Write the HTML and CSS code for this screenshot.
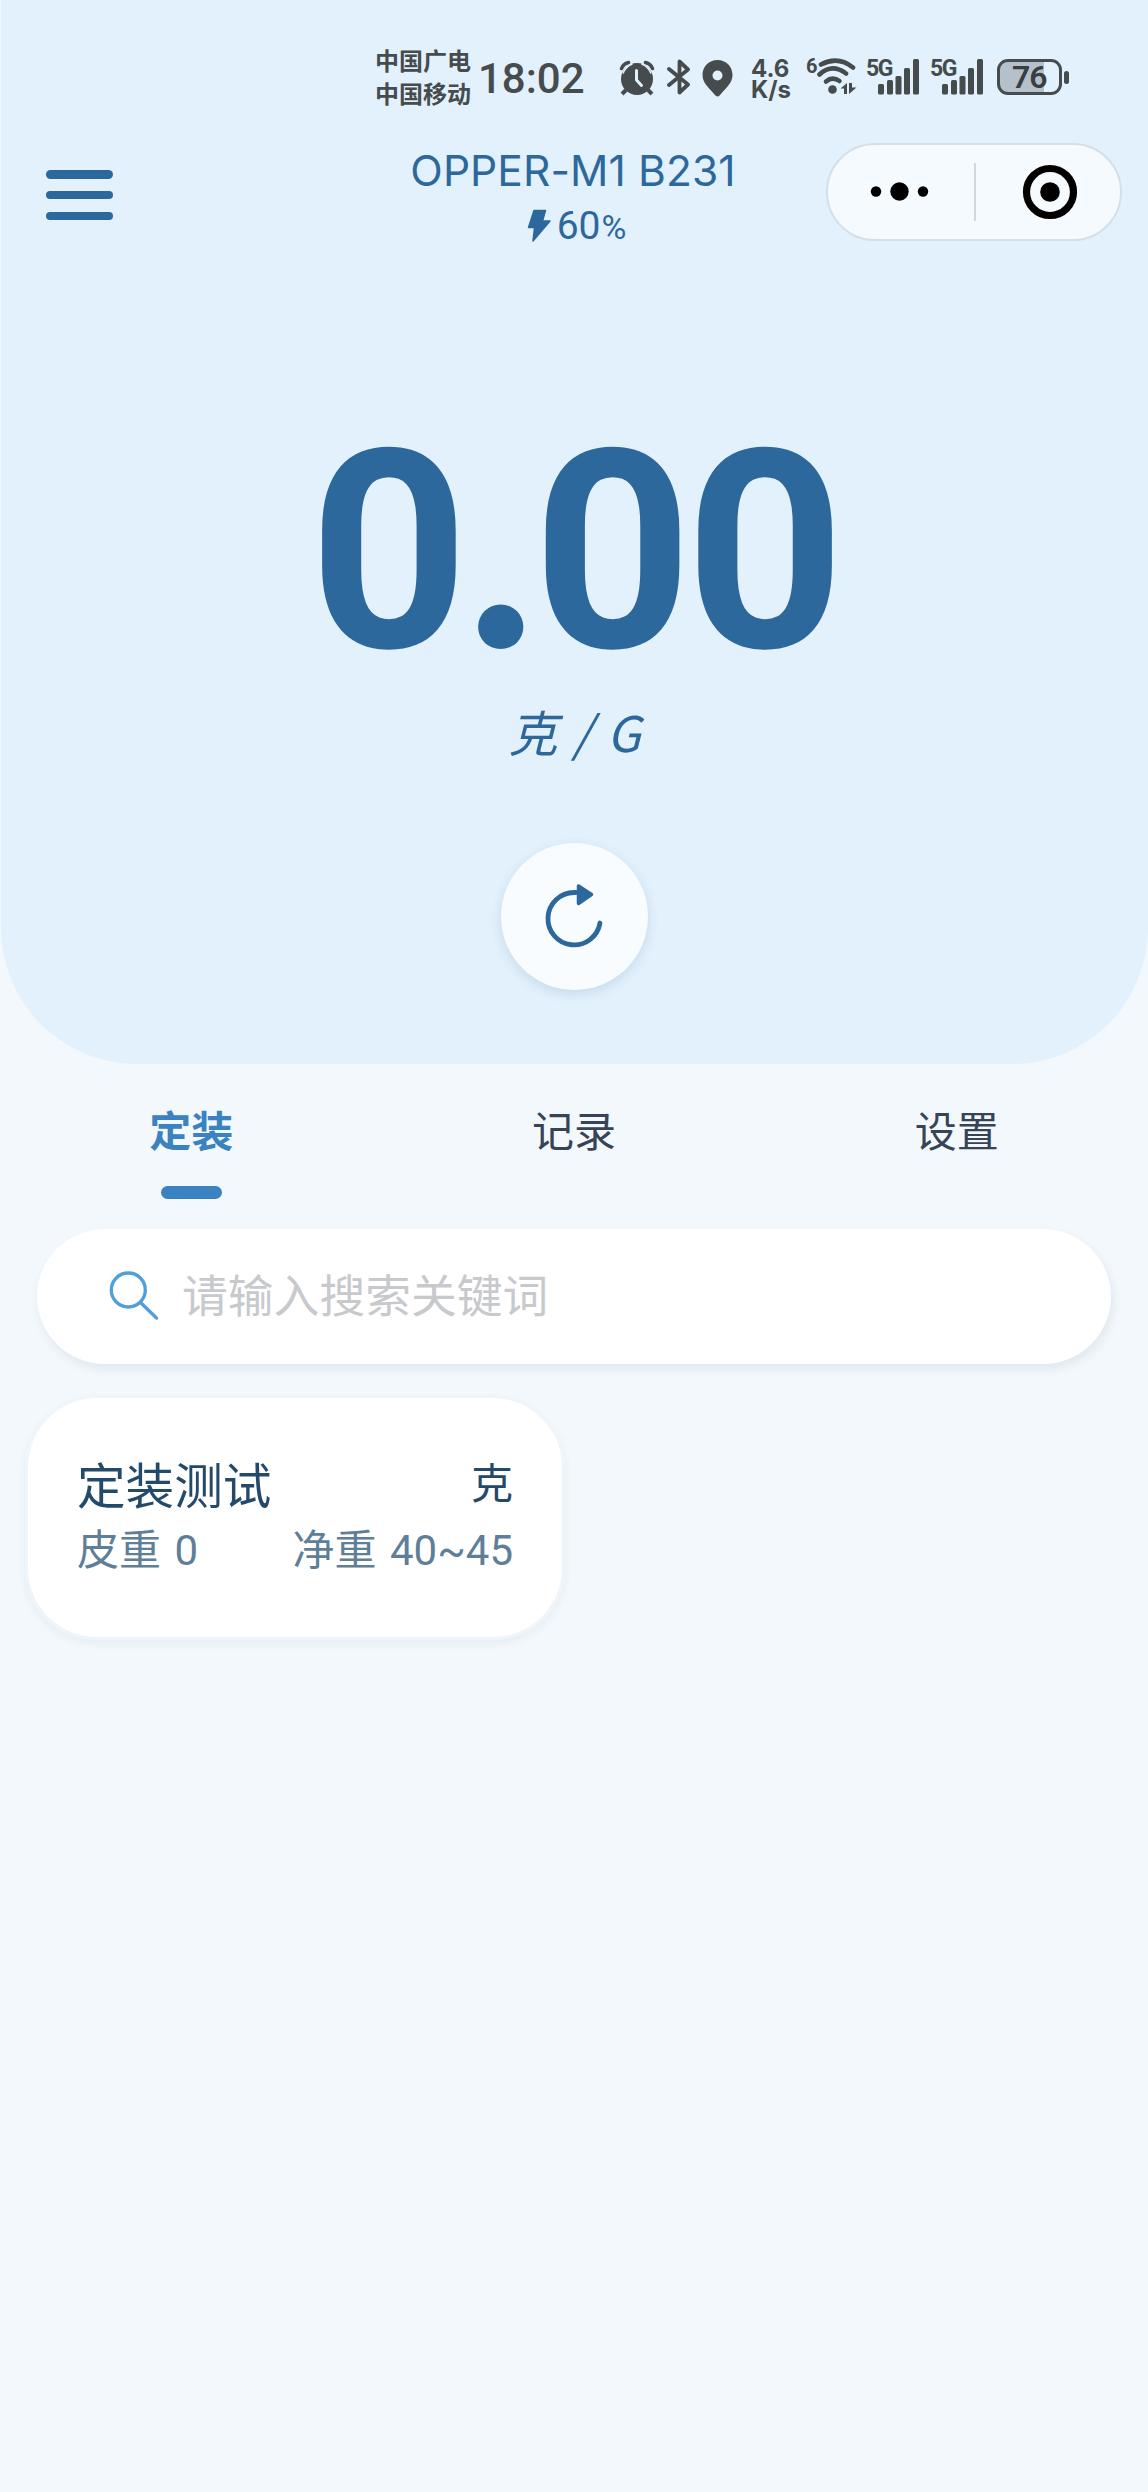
FILE: index.html
```html
<!DOCTYPE html>
<html lang="zh-CN">
<head>
<meta charset="utf-8">
<title>OPPER-M1 B231</title>
<link rel="stylesheet" href="styles.css">
</head>
<body>
<main class="page">
  <section class="hero">
    <div class="status">
      <div class="carriers"><span>中国广电</span><span>中国移动</span></div>
      <span class="clock">18:02</span>
      <svg class="alarm" width="36" height="36" viewBox="0 0 36 36"><circle cx="18" cy="19" r="16" fill="#464b4e"/><path d="M2.500 8.500Q4 4 9.500 2.500M33.500 8.500Q32 4 26.500 2.500" fill="none" stroke="#464b4e" stroke-width="3.600" stroke-linecap="round"/><path d="M7 30l-4 4M29 30l4 4" stroke="#464b4e" stroke-width="4"/><path d="M4 13.500Q7 6 13.500 4M32 13.500Q29 6 22.500 4" fill="none" stroke="#e2f1fc" stroke-width="1.600"/><path d="M17.500 10.500v9.500l5 5.500" fill="none" stroke="#e2f1fc" stroke-width="3" stroke-linecap="round" stroke-linejoin="round"/></svg>
      <svg class="bluetooth" width="24" height="36" viewBox="0 0 24 36"><path d="M2 10l19 15.500-8.500 8V2.500l8.500 8L2 26" fill="none" stroke="#464b4e" stroke-width="3.800" stroke-linecap="round" stroke-linejoin="round"/></svg>
      <svg class="pin" width="31" height="37" viewBox="0 0 31 37"><path d="M15.500 0C7 0 .5 6.600.5 15 .5 23 7 28 12.500 34.500c2 2.500 4 2.500 6 0C24 28 30.500 23 30.500 15 30.500 6.600 24 0 15.500 0zm0 10.500a5 5 0 1 1 0 10 5 5 0 0 1 0-10z" fill="#464b4e" fill-rule="evenodd"/></svg>
      <div class="speed"><span>4.6</span><span>K/s</span></div>
      <span class="wifi-gen">6</span>
      <svg class="wifi" width="42" height="38" viewBox="0 0 42 38"><g fill="none" stroke="#464b4e" stroke-width="4.600" stroke-linecap="round"><path d="M4 6.500Q21-2.500 36 9.500"/><path d="M2.500 16.500Q15 5 29 15.500"/><path d="M9 23.500Q15.500 18 22.500 23"/></g><circle cx="15.500" cy="31.500" r="4.300" fill="#464b4e"/><path d="M30 25v11h-3v-5.500h-3.500zM32 25v11l7.500-6.500H35V25z" fill="#464b4e"/></svg>
      <div class="signal"><span>5G</span><svg width="42" height="36" viewBox="0 0 42 36"><g fill="#464b4e"><rect y="25" width="6" height="10.500" rx="1.500"/><rect x="9" y="21" width="6" height="14.500" rx="1.500"/><rect x="17.500" y="17" width="6" height="18.500" rx="1.500"/><rect x="26" y="9" width="6" height="26.500" rx="1.500"/><rect x="35" width="6" height="35.500" rx="1.500"/></g></svg></div>
      <div class="signal"><span>5G</span><svg width="42" height="36" viewBox="0 0 42 36"><g fill="#464b4e"><rect y="25" width="6" height="10.500" rx="1.500"/><rect x="9" y="21" width="6" height="14.500" rx="1.500"/><rect x="17.500" y="17" width="6" height="18.500" rx="1.500"/><rect x="26" y="9" width="6" height="26.500" rx="1.500"/><rect x="35" width="6" height="35.500" rx="1.500"/></g></svg></div>
      <div class="battery"><span>76</span></div><i class="battery-tip"></i>
    </div>

    <header class="nav">
      <div class="menu"><i></i><i></i><i></i></div>
      <div class="device">
        <div class="device-name">OPPER-M1 B231</div>
        <div class="device-power">
          <svg width="24" height="34" viewBox="0 0 24 34"><path d="M7 1.500h11.500l-3 10.500h7.500L6 32l1.500-13.500H1.500z" fill="#2d689c" stroke="#2d689c" stroke-width="1.500" stroke-linejoin="round"/></svg>
          <span>60<small>%</small></span>
        </div>
      </div>
      <div class="capsule">
        <svg width="146" height="96" viewBox="0 0 146 96"><circle cx="48" cy="47.500" r="5.200"/><circle cx="71.500" cy="47.500" r="9.200"/><circle cx="95" cy="47.500" r="5.200"/></svg>
        <i class="divider"></i>
        <svg width="144" height="96" viewBox="0 0 144 96"><circle cx="76" cy="48" r="23.500" fill="none" stroke="#000" stroke-width="7.200"/><circle cx="76" cy="48" r="9.800"/></svg>
      </div>
    </header>

    <div class="weight">0<span>.</span>00</div>
    <div class="unit">克 / G</div>
    <div class="reset">
      <svg width="72" height="80" viewBox="0 0 72 80"><path d="M37 15.500H35A26.200 26.200 0 1 0 61 46" fill="none" stroke="#2d689c" stroke-width="4.800" stroke-linecap="round"/><path d="M39.500 9v17.500l13-9z" fill="#2d689c" stroke="#2d689c" stroke-width="3.500" stroke-linejoin="round"/></svg>
    </div>
  </section>

  <nav class="tabs">
    <div class="tab active">定装</div>
    <div class="tab">记录</div>
    <div class="tab">设置</div>
  </nav>

  <div class="search">
    <svg width="52" height="52" viewBox="0 0 52 52"><circle cx="20.300" cy="19" r="17" fill="none" stroke="#4f9fda" stroke-width="3.300"/><path d="M32.500 31.500L48.500 47" stroke="#4f9fda" stroke-width="3.300" stroke-linecap="round"/></svg>
    <span>请输入搜索关键词</span>
  </div>

  <article class="card">
    <div class="card-head"><span class="card-title">定装测试</span><span class="card-unit">克</span></div>
    <div class="card-row"><span>皮重 0</span><span>净重 40~45</span></div>
  </article>
</main>
</body>
</html>
```
FILE: styles.css
```css
* { box-sizing: border-box; }

body {
  margin: 0;
  background: #f2f8fc;
  font-family: "Noto Sans CJK SC", sans-serif;
}

svg { display: block; flex: none; }

.page { width: 1148px; height: 2492px; overflow: hidden; }

.hero {
  height: 1064px;
  margin-left: 1px;
  border-radius: 0 0 136px 136px;
  background: #e2f1fc;
  color: #2d689c;
  display: flex;
  flex-direction: column;
  align-items: center;
}

/* phone status bar */
.status {
  width: 100%;
  height: 143px;
  padding: 44px 0 0 374px;
  display: flex;
  align-items: flex-start;
  color: #464b4e;
  white-space: nowrap;
}

.carriers {
  width: 97px;
  margin-top: -1px;
  display: flex;
  flex-direction: column;
  font-size: 24px;
  font-weight: 700;
  line-height: 33px;
}

.clock {
  width: 106px;
  margin: 12px 0 0 6px;
  font: 500 42px/46px Roboto, sans-serif;
}

.alarm { margin: 16px 0 0 35px; }
.bluetooth { margin: 15px 0 0 12px; }
.pin { margin: 16px 0 0 11px; }

.speed {
  width: 43px;
  margin: 14px 0 0 18px;
  display: flex;
  flex-direction: column;
  font: 700 24px/21px Inter, sans-serif;
}

.wifi-gen {
  width: 11px;
  margin: 12px 0 0 12px;
  font: 700 20px/20px Roboto, sans-serif;
}

.wifi { margin: 14px 0 0 0; }

.signal {
  width: 54px;
  margin: 15px 0 0 7px;
  display: grid;
}

.signal + .signal { margin-left: 10px; }
.signal > * { grid-area: 1 / 1; }

.signal span {
  font: 700 23px/19px Roboto, sans-serif;
  letter-spacing: -1.5px;
}

.signal svg { margin-left: 12px; }

.battery {
  width: 65px;
  height: 36px;
  margin: 15px 0 0 13px;
  border: 3px solid #464b4e;
  border-radius: 11px;
  background: linear-gradient(90deg, #b4c0ca 44px, transparent 44px);
  font: 600 32px/31px Roboto, sans-serif;
  letter-spacing: -1px;
  padding-left: 12px;
  color: #393e41;
}

.battery-tip {
  width: 5px;
  height: 13px;
  margin: 27px 0 0 2px;
  border-radius: 3px;
  background: #464b4e;
}

/* mini-program navigation */
.nav {
  width: 100%;
  height: 98px;
  padding: 0 26px 0 45px;
  display: grid;
  grid-template-columns: 295px 1fr 296px;
}

.menu {
  width: 67px;
  height: 50px;
  margin-top: 27px;
  display: flex;
  flex-direction: column;
  justify-content: space-between;
}

.menu i { height: 8.500px; border-radius: 5px; background: #2d689c; }

.device { display: flex; flex-direction: column; align-items: center; white-space: nowrap; margin-right: 21px; }

.device-name {
  font: 400 42.500px/50px Inter, sans-serif;
  letter-spacing: 0.100px;
  margin-top: 3px;
}

.device-power {
  display: flex;
  align-items: center;
  gap: 6px;
  height: 44px;
  margin: 8px 0 0 7px;
  font: 400 39px/44px Roboto, sans-serif;
}

.device-power small { font-size: 34px; margin-left: 1px; }

.capsule {
  height: 98px;
  border: 2px solid #d5dfe7;
  border-radius: 50px;
  background: #f5fafe;
  display: flex;
  align-items: center;
}

.divider { width: 2px; height: 58px; margin-right: -2px; background: #d0d8de; }

.weight {
  height: 260px;
  margin: 181px 2px 0 0;
  font: 700 278px/260px Roboto, sans-serif;
  letter-spacing: -7px;
  white-space: nowrap;
}

.weight span {
  margin: 0 6px;
  font-family: Lato, sans-serif;
  font-weight: 900;
  line-height: 0;
}

.unit {
  height: 72px;
  margin-top: 13px;
  font-size: 49px;
  font-style: italic;
  font-weight: 400;
  line-height: 72px;
  word-spacing: 4px;
}

.reset {
  width: 147px;
  height: 147px;
  margin-top: 76px;
  border-radius: 50%;
  background: #f8fcff;
  box-shadow: 0 4px 12px rgba(45, 80, 130, 0.14);
  display: grid;
  place-items: center;
}

/* section tabs */
.tabs {
  height: 165px;
  display: grid;
  grid-template-columns: repeat(3, 1fr);
}

.tab {
  padding-top: 34px;
  text-align: center;
  font-size: 42px;
  line-height: 62px;
  color: #374357;
}

.tab.active { font-weight: 700; color: #3a82c0; }

.tab.active::after {
  content: "";
  display: block;
  width: 61px;
  height: 13px;
  margin: 26px auto 0;
  border-radius: 7px;
  background: #3a82c0;
}

.search {
  width: 1074px;
  height: 135px;
  margin-left: 37px;
  padding-left: 71px;
  border-radius: 68px;
  background: #fff;
  box-shadow: 2px 5px 10px rgba(50, 70, 100, 0.09);
  display: flex;
  align-items: center;
  gap: 22px;
  font-size: 45.800px;
  color: #c8c9cc;
}

.search span { margin-bottom: 7px; }

.card {
  width: 540px;
  height: 245px;
  margin: 31px 0 0 25px;
  padding: 51px 49px 0 49px;
  border: 3px solid #f0f5fa;
  border-radius: 72px;
  background: #fff;
  background-clip: padding-box;
  box-shadow: 0 4px 8px rgba(50, 80, 120, 0.06);
}

.card-head, .card-row { display: flex; justify-content: space-between; white-space: nowrap; }
.card-head { height: 71px; color: #244a6b; }
.card-title { font-size: 48.600px; line-height: 69px; }
.card-unit { font-size: 42px; line-height: 64px; }

.card-row {
  height: 60px;
  font: 400 42px/62px Roboto, "Noto Sans CJK SC", sans-serif;
  word-spacing: 3px;
  color: #5f7f99;
}
```
